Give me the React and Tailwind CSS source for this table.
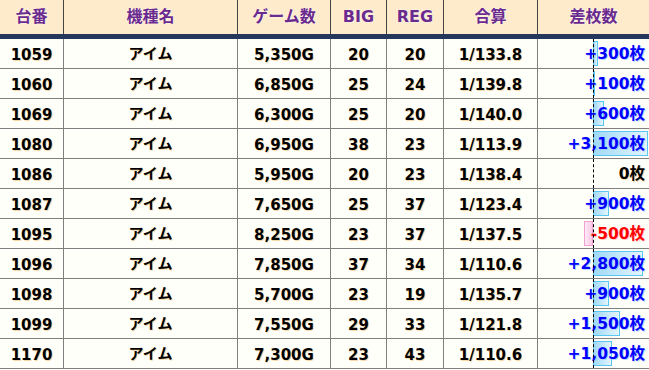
import React from "react";

const rows = [
  ["1059", "5,350G", 20, 20, "1/133.8", 300],
  ["1060", "6,850G", 25, 24, "1/139.8", 100],
  ["1069", "6,300G", 25, 20, "1/140.0", 600],
  ["1080", "6,950G", 38, 23, "1/113.9", 3100],
  ["1086", "5,950G", 20, 23, "1/138.4", 0],
  ["1087", "7,650G", 25, 37, "1/123.4", 900],
  ["1095", "8,250G", 23, 37, "1/137.5", -500],
  ["1096", "7,850G", 37, 34, "1/110.6", 2800],
  ["1098", "5,700G", 23, 19, "1/135.7", 900],
  ["1099", "7,550G", 29, 33, "1/121.8", 1500],
  ["1170", "7,300G", 23, 43, "1/110.6", 1050],
];

const fmt = (n) => {
  const s = Math.abs(n).toLocaleString("en-US");
  if (n > 0) return "+" + s + "枚";
  if (n < 0) return "-" + s + "枚";
  return "0枚";
};

const font = { fontFamily: '"DejaVu Sans", "Noto Sans CJK JP", sans-serif' };

function Diff({ v }) {
  const w = (Math.abs(v) / 3100) * 55;
  return (
    <div className="relative w-[112px] h-full border-l border-[#808080]">
      {v > 0 && (
        <div
          className="absolute top-[2px] bottom-[2px] left-[55px] border border-[#5ac8f2] bg-gradient-to-r from-[#9fd9f6] to-[#e4f5fd] z-0"
          style={{ width: w }}
        />
      )}
      {v < 0 && (
        <div
          className="absolute top-[2px] bottom-[2px] right-[56px] border border-[#f2a2d2] bg-gradient-to-l from-[#fbc8e6] to-[#fdebf6] z-0"
          style={{ width: w }}
        />
      )}
      <div
        className={`absolute inset-0 z-10 flex items-center justify-end pr-[4px] pt-[2px] text-[15.5px] leading-none font-bold ${
          v > 0
            ? "text-[#0000ff] [text-shadow:1px_1px_0_rgba(150,190,255,0.6)]"
            : v < 0
            ? "text-[#ff0000] [text-shadow:1px_1px_0_rgba(255,170,170,0.6)]"
            : "text-black [text-shadow:1px_1px_0_rgba(240,170,60,0.45)]"
        }`}
      >
        {fmt(v)}
      </div>
      <div className="absolute top-0 bottom-0 left-[55px] z-20 border-l border-dashed border-black" />
    </div>
  );
}

const widths = ["w-[63px]", "w-[174px]", "w-[93px]", "w-[56px]", "w-[57px]", "w-[94px]"];

export default function App() {
  const cell =
    "h-full flex items-center justify-center pt-[3px] text-[15px] leading-none font-bold text-black [text-shadow:1px_1px_0_rgba(240,170,60,0.45)]";
  const head =
    "h-full flex items-center justify-center text-[16px] leading-none font-bold text-[#6a2a8e] [text-shadow:0_0_2px_#ffffff]";
  const headers = ["台番", "機種名", "ゲーム数", "BIG", "REG", "合算"];
  return (
    <div className="w-[649px] h-[370px] bg-[#fffffa] overflow-hidden" style={font}>
      <div className="flex h-[34px] bg-[#fdebcc]">
        {headers.map((h, i) => (
          <div key={h} className={`${head} ${widths[i]} ${i ? "border-l border-[#444]" : ""}`}>
            {h}
          </div>
        ))}
        <div className={`${head} w-[112px] border-l border-[#444]`}>差枚数</div>
      </div>
      <div className="h-[5px] bg-[#25375a]" />
      {rows.map((r) => (
        <div key={r[0]} className="flex h-[30px] border-b border-[#808080]">
          <div className={`${cell} w-[63px]`}>{r[0]}</div>
          <div className={`${cell} w-[174px] border-l border-[#808080]`}>
            <span className="-translate-y-[3px]" style={{ fontFamily: '"Noto Sans CJK JP", sans-serif' }}>
              アイム
            </span>
          </div>
          <div className={`${cell} w-[93px] border-l border-[#808080]`}>{r[1]}</div>
          <div className={`${cell} w-[56px] border-l border-[#808080]`}>{r[2]}</div>
          <div className={`${cell} w-[57px] border-l border-[#808080]`}>{r[3]}</div>
          <div className={`${cell} w-[94px] border-l border-[#808080]`}>{r[4]}</div>
          <Diff v={r[5]} />
        </div>
      ))}
    </div>
  );
}
